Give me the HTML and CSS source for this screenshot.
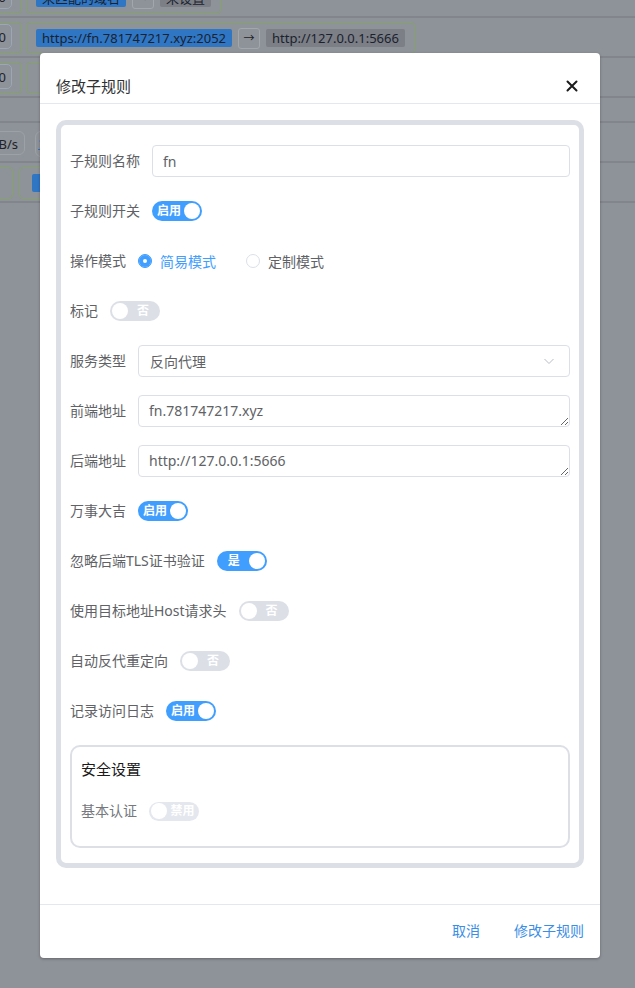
FILE: index.html
```html
<!DOCTYPE html>
<html>
<head>
    <meta charset="utf-8">
    <title>修改子规则</title>
    <link rel="stylesheet" href="styles.css">
</head>
<body>

    <!-- page behind the dialog (dimmed) -->
    <div class="page">
        <div class="listRow">
            <div class="cellNum"><span class="numBox">0</span></div>
            <div class="cellMap">
                <span class="tag tagBlue">未匹配的域名</span>
                <span class="arrowBox">&rarr;</span>
                <span class="tag tagGrey">未设置</span>
            </div>
        </div>
        <div class="listRow">
            <div class="cellNum"><span class="numBox">0</span></div>
            <div class="cellMap">
                <span class="tag tagBlue">https://fn.781747217.xyz:2052</span>
                <span class="arrowBox">&rarr;</span>
                <span class="tag tagGrey">http://127.0.0.1:5666</span>
            </div>
        </div>
        <div class="listRow">
            <div class="cellNum"><span class="numBox">0</span></div>
            <div class="cellMap cellWide"></div>
        </div>
        <div class="listRow rowShort"></div>
        <div class="listRow rowStats">
            <span class="statBox">B/s</span>
            <span class="statLink">1</span>
        </div>
        <div class="listRow rowLast">
            <div class="cellSmall"></div>
            <div class="cellMap cellWide"><span class="tag tagBlue tagStub">&nbsp;</span></div>
        </div>
    </div>

    <div class="dialog">
        <div class="dialogHeader">
            <span class="dialogTitle">修改子规则</span>
            <span class="dialogClose">
                <svg width="12" height="12" viewBox="0 0 12 12"><path d="M1.5 1.5 L10.5 10.5 M10.5 1.5 L1.5 10.5" stroke="#1b1b1b" stroke-width="2" stroke-linecap="round"/></svg>
            </span>
        </div>

        <div class="dialogBody">
            <div class="ruleBox">
                <div class="formItem">
                    <label class="formLabel">子规则名称</label>
                    <input class="textInput" type="text" value="fn">
                </div>
                <div class="formItem">
                    <label class="formLabel">子规则开关</label>
                    <span class="switch switchOn"><span class="switchText">启用</span><span class="switchDot"></span></span>
                </div>
                <div class="formItem">
                    <label class="formLabel">操作模式</label>
                    <span class="radio radioChecked"><span class="radioDot"></span>简易模式</span>
                    <span class="radio"><span class="radioDot"></span>定制模式</span>
                </div>
                <div class="formItem">
                    <label class="formLabel">标记</label>
                    <span class="switch"><span class="switchDot"></span><span class="switchText">否</span></span>
                </div>
                <div class="formItem">
                    <label class="formLabel">服务类型</label>
                    <div class="selectBox">
                        <span>反向代理</span>
                        <svg width="12" height="12" viewBox="0 0 12 12"><path d="M1.5 4 L6 8.5 L10.5 4" fill="none" stroke="#b8bcc4" stroke-width="1"/></svg>
                    </div>
                </div>
                <div class="formItem">
                    <label class="formLabel">前端地址</label>
                    <textarea class="textArea" rows="1">fn.781747217.xyz</textarea>
                </div>
                <div class="formItem">
                    <label class="formLabel">后端地址</label>
                    <textarea class="textArea" rows="1">http://127.0.0.1:5666</textarea>
                </div>
                <div class="formItem">
                    <label class="formLabel">万事大吉</label>
                    <span class="switch switchOn"><span class="switchText">启用</span><span class="switchDot"></span></span>
                </div>
                <div class="formItem">
                    <label class="formLabel">忽略后端TLS证书验证</label>
                    <span class="switch switchOn"><span class="switchText">是</span><span class="switchDot"></span></span>
                </div>
                <div class="formItem">
                    <label class="formLabel">使用目标地址Host请求头</label>
                    <span class="switch"><span class="switchDot"></span><span class="switchText">否</span></span>
                </div>
                <div class="formItem">
                    <label class="formLabel">自动反代重定向</label>
                    <span class="switch"><span class="switchDot"></span><span class="switchText">否</span></span>
                </div>
                <div class="formItem">
                    <label class="formLabel">记录访问日志</label>
                    <span class="switch switchOn"><span class="switchText">启用</span><span class="switchDot"></span></span>
                </div>

                <div class="securityBox">
                    <div class="securityTitle">安全设置</div>
                    <div class="securityItem">
                        <label class="formLabel labelLight">基本认证</label>
                        <span class="switch switchSmall"><span class="switchDot"></span><span class="switchText">禁用</span></span>
                    </div>
                </div>
            </div>
        </div>

        <div class="dialogFooter">
            <button class="textBtn">取消</button>
            <button class="textBtn">修改子规则</button>
        </div>
    </div>

</body>
</html>
```

FILE: styles.css
```css
body {
    margin: 0;
    overflow: hidden;
    background-color: #8e9299;
    font-family: "Noto Sans", "Noto Sans CJK SC", sans-serif;
}

/* dimmed page behind the dialog */
.page {
    margin-top: -22px;
}
.listRow {
    display: flex;
    align-items: flex-start;
    height: 40px;
    padding-top: 4px;
    box-sizing: border-box;
    border-bottom: 2px solid #82858b;
}
.rowShort { height: 25px; }
.rowStats { padding-top: 8px; }
.rowLast { padding-top: 4px; }
.cellNum {
    display: flex;
    align-items: flex-start;
    justify-content: flex-end;
    width: 34px;
    height: 32px;
    margin-left: -12px;
    padding: 1px 9px 0 0;
    box-sizing: border-box;
    border: 1px solid #87a16e;
    border-radius: 4px;
}
.numBox {
    width: 24px;
    height: 25px;
    line-height: 24px;
    padding-right: 5px;
    font-size: 13px;
    color: #1f2328;
    text-align: right;
    border: 1px solid #9ba6b6;
    border-radius: 5px;
    box-sizing: border-box;
}
.cellMap {
    display: flex;
    align-items: center;
    gap: 6px;
    height: 32px;
    margin-left: 4px;
    padding: 0 9px;
    box-sizing: border-box;
    border: 1px solid #87a16e;
    border-radius: 4px;
}
.cellWide { width: 400px; }
.rowLast .cellWide { height: 32px; margin-left: 6px; padding: 0 12px; }
.cellSmall {
    width: 25px;
    height: 32px;
    margin-left: -12px;
    box-sizing: border-box;
    border: 1px solid #87a16e;
    border-radius: 4px;
}
.tag {
    height: 18px;
    line-height: 18px;
    padding: 0 6px;
    font-size: 13px;
    color: #1a2230;
    border-radius: 2px;
    white-space: nowrap;
}
.tagBlue { background: #2f76c4; }
.tagGrey { background: #7c7f85; }
.tagStub { width: 4px; height: 18px; }
.arrowBox {
    width: 20px;
    height: 19px;
    line-height: 18px;
    text-align: center;
    font-size: 11px;
    color: #222;
    border: 1px solid #a2a6ad;
    border-radius: 3px;
}
.statBox {
    width: 44px;
    height: 24px;
    line-height: 24px;
    margin-left: -19px;
    text-align: right;
    padding-right: 6px;
    box-sizing: border-box;
    font-size: 13px;
    color: #1f2328;
    border: 1px solid #9ca0a7;
    border-radius: 6px;
}
.statLink {
    margin-left: 10px;
    width: 40px;
    height: 24px;
    line-height: 24px;
    padding-left: 2px;
    font-size: 12px;
    color: #2f76c4;
    text-decoration: underline;
    border: 1px solid #9ca0a7;
    border-radius: 6px;
}

/* dialog */
.dialog {
    position: absolute;
    top: 53px;
    left: 40px;
    width: 560px;
    background: #fff;
    border-radius: 4px;
    box-shadow: 0 1px 3px rgba(0, 0, 0, 0.3);
}
.dialogHeader {
    display: flex;
    align-items: center;
    justify-content: space-between;
    padding: 21px 22px 5px 16px;
    border-bottom: 1px solid #e4e7ed;
}
.dialogTitle {
    font-size: 15px;
    line-height: 24px;
    color: #303133;
}
.dialogClose {
    display: flex;
    width: 12px;
    height: 12px;
    cursor: pointer;
}
.dialogBody {
    padding: 16px 16px 36px;
}
.ruleBox {
    padding: 20px 9px 15px;
    border: 5px solid #dcdfe6;
    border-radius: 10px;
}
.formItem {
    display: flex;
    align-items: center;
    height: 32px;
    margin-bottom: 18px;
}
.formLabel {
    flex-shrink: 0;
    padding-right: 12px;
    font-size: 14px;
    line-height: 32px;
    color: #606266;
    white-space: nowrap;
}
.labelLight { color: #75787d; }

.textInput, .selectBox, .textArea {
    flex: 1;
    height: 32px;
    box-sizing: border-box;
    border: 1px solid #dcdfe6;
    border-radius: 4px;
    font-family: inherit;
    font-size: 14px;
    color: #606266;
    outline: none;
}
.textInput { padding: 0 10px; }
.selectBox {
    display: flex;
    align-items: center;
    justify-content: space-between;
    padding: 0 14px 0 11px;
}
.textArea {
    padding: 4px 10px;
    line-height: 22px;
    resize: vertical;
    overflow: hidden;
}

/* switch */
.switch {
    display: inline-flex;
    align-items: center;
    width: 50px;
    height: 20px;
    padding: 0 2px;
    box-sizing: border-box;
    border-radius: 10px;
    background: #dcdfe6;
}
.switchOn { background: #409eff; }
.switchDot {
    width: 16px;
    height: 16px;
    border-radius: 50%;
    background: #fff;
}
.switchText {
    flex: 1;
    text-align: center;
    font-size: 12px;
    font-weight: bold;
    line-height: 20px;
    color: #fff;
}
.switchSmall {
    height: 19px;
    background: #e4e7ed;
}
.switchSmall .switchText { padding-left: 1px; }

/* radio */
.radio {
    display: inline-flex;
    align-items: center;
    margin-right: 30px;
    font-size: 14px;
    color: #606266;
}
.radioDot {
    width: 14px;
    height: 14px;
    margin-right: 8px;
    box-sizing: border-box;
    border: 1px solid #dcdfe6;
    border-radius: 50%;
    background: #fff;
}
.radioChecked { color: #409eff; }
.radioChecked .radioDot {
    border-color: #409eff;
    background: #409eff;
    box-shadow: inset 0 0 0 4px #409eff, inset 0 0 0 7px #fff;
}

/* security box */
.securityBox {
    padding: 10px 9px 23px;
    border: 2px solid #dcdfe6;
    border-radius: 10px;
}
.securityTitle {
    margin-bottom: 18px;
    font-size: 15px;
    line-height: 24px;
    color: #1a1a1a;
}
.securityItem {
    display: flex;
    align-items: center;
    height: 24px;
}

.dialogFooter {
    display: flex;
    justify-content: flex-end;
    gap: 34px;
    padding: 15px 16px 16px;
    border-top: 1px solid #e4e7ed;
}
.textBtn {
    padding: 0;
    border: none;
    background: none;
    font-family: inherit;
    font-size: 14px;
    line-height: 22px;
    color: #3a8ee6;
    cursor: pointer;
}
```
